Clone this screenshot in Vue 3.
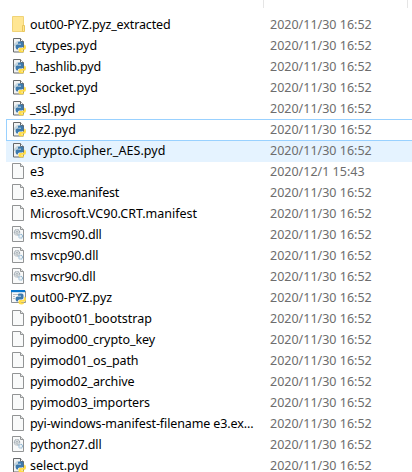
<script setup>
import { onMounted, ref } from 'vue'

const files = ref([
  ['folder', 'out00-PYZ.pyz_extracted', 140.5],
  ['python', '_ctypes.pyd', 67],
  ['python', '_hashlib.pyd', 71],
  ['python', '_socket.pyd', 68],
  ['python', '_ssl.pyd', 45],
  ['python', 'bz2.pyd', 46, 'focused'],
  ['python', 'Crypto.Cipher._AES.pyd', 135.5, 'hovered'],
  ['file', 'e3', 14],
  ['file', 'e3.exe.manifest', 89],
  ['file', 'Microsoft.VC90.CRT.manifest', 167],
  ['dll', 'msvcm90.dll', 71.5],
  ['dll', 'msvcp90.dll', 68.5],
  ['dll', 'msvcr90.dll', 65.5],
  ['archive', 'out00-PYZ.pyz', 82],
  ['file', 'pyiboot01_bootstrap', 122],
  ['file', 'pyimod00_crypto_key', 125],
  ['file', 'pyimod01_os_path', 108.5],
  ['file', 'pyimod02_archive', 104.5],
  ['file', 'pyimod03_importers', 120],
  ['file', 'pyi-windows-manifest-filename e3.ex...', 223.5],
  ['dll', 'python27.dll', 71.5],
  ['python', 'select.pyd', 58.5],
].map(([icon, name, width, state]) => ({
  icon,
  name,
  width,
  state,
  spacing: 0,
  date: name === 'e3' ? '2020/12/1 15:43' : '2020/11/30 16:52',
})))

const list = ref(null)

onMounted(() => {
  list.value.querySelectorAll('.label').forEach((label, i) => {
    const file = files.value[i]
    file.spacing = (file.width - label.getBoundingClientRect().width) / file.name.length
  })
})
</script>

<template>
  <main ref="list" class="explorer">
    <header class="columns"><span class="name-head"></span><span class="date-head"></span></header>
    <div v-for="file in files" :key="file.name" class="row" :class="file.state">
      <svg class="icon" width="16" height="17" viewBox="0 0 16 17">
        <g v-if="file.icon === 'folder'">
          <path d="M.5 .5h11v15H.5z" fill="#ffe693" stroke="#f0d377" />
          <path d="M10.5 9.5h2v6h-2z" fill="#ffe693" stroke="#e9c65d" />
        </g>
        <g v-else-if="file.icon === 'archive'">
          <path d="M-.5 2h14v11.5h-14z" fill="#f7f8f9" stroke="#8b9196" />
          <path d="M-1 1h14v2.2H-1z" fill="#0877ce" />
          <path d="M1 5.5h5M1 7.5h2M1 9.5h2" stroke="#b9bec2" />
        </g>
        <g v-else-if="file.icon === 'python'" stroke="#65686a">
          <path d="M1.5 1.5h7l3 3v10.5h-10z" fill="#f1f2f2" />
          <path d="M8.5 1.5v3h3" fill="#fff" />
          <path d="M2 9V7l3-3h2v3L5 9z" fill="#c3d5df" stroke="none" />
        </g>
        <g v-else stroke="#929495">
          <path d="M.5 .5h8l3 3v12H.5z" fill="#f9fafa" />
          <path d="M8.5 .5v3h3" fill="#e4e5e6" />
        </g>
        <g v-if="file.icon === 'dll'" fill="#eef1f3">
          <circle cx="5" cy="6.3" r="2.7" stroke="#929da5" stroke-width="1.1" stroke-dasharray="1 .5" />
          <circle cx="5" cy="6.3" r="1.1" stroke="#8d989f" stroke-width=".7" />
          <circle cx="8.7" cy="10.2" r="1.9" stroke="#8db4d0" stroke-width="1.1" stroke-dasharray="1 .4" />
        </g>
        <g v-if="file.icon === 'python' || file.icon === 'archive'" transform="translate(3.5 4.5)">
          <path d="M3.2 0h3Q8 0 8 1.8v2.4Q8 6 6.2 6H4Q2.3 6 2.3 8H1.2Q0 7 0 5.2q0-2.2 2-2.2h3.5v-.7h-3V1z" fill="#3d7aad" />
          <path d="M8.7 3q1.8 .2 1.8 2.8T8.7 8.3H5.8V9h2.7v1q-.6 1-2.8 1Q3 11 3 9.3V8q0-1.5 1.5-1.5H7q1.7 0 1.7-2z" fill="#ffdc48" />
        </g>
      </svg>
      <span class="name"><span class="label" :style="{ letterSpacing: file.spacing + 'px' }">{{ file.name }}</span></span>
      <span class="date">{{ file.date }}</span>
    </div>
  </main>
</template>

<style>
body { background: #fff; }
</style>

<style scoped>
.explorer {
  width: 412px;
  height: 472px;
  overflow: hidden;
  background: #fff;
  font: 12.5px/19px "Noto Sans", "Noto Sans CJK SC", sans-serif;
  color: #000;
}
.columns { display: flex; height: 15px; }
.columns span { box-sizing: border-box; height: 8px; border-right: 1px solid #e5e5e5; }
.name-head { width: 264px; }
.date-head { width: 144px; }
.row {
  display: flex;
  height: 21px;
  margin-left: 6px;
  padding-left: 6px;
  align-items: flex-start;
  white-space: pre;
}
.icon { flex: none; width: 16px; height: 17px; margin-top: 1px; overflow: visible; }
.name { width: 240px; margin-left: 2px; }
.date { color: #6d6d6d; }
.focused { box-shadow: 0 -1px #99d1ff, inset 1px 0 #99d1ff, inset 0 -1px #99d1ff; }
.hovered { background: #e5f3ff; }
</style>
